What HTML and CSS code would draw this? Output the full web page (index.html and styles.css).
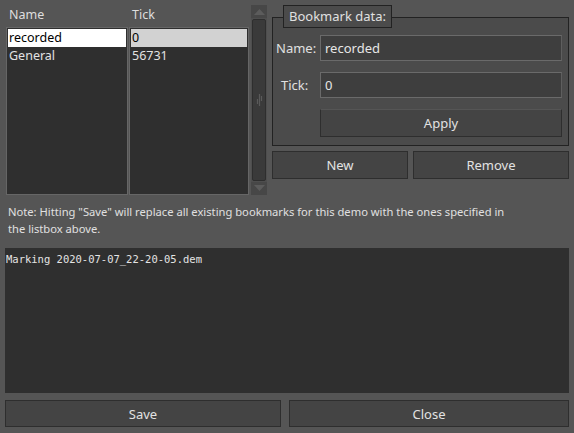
FILE: index.html
```html
<!DOCTYPE html>
<html>
<head>
<meta charset="utf-8">
<link rel="stylesheet" href="styles.css">
</head>
<body>
<div class="dialog">
  <div class="top">
    <div class="lists">
      <div class="col col-name">
        <div class="head">Name</div>
        <div class="box">
          <div class="row sel-white">recorded</div>
          <div class="row">General</div>
        </div>
      </div>
      <div class="col col-tick">
        <div class="head">Tick</div>
        <div class="box">
          <div class="row sel-gray">0</div>
          <div class="row">56731</div>
        </div>
      </div>
    </div>
    <div class="scroll">
      <div class="arrow up"><svg width="15" height="11" viewBox="0 0 15 11"><path d="M2 9 L7.5 3 L13 9 Z" fill="#5c5c5c"/></svg></div>
      <div class="thumb"><svg width="8" height="14" viewBox="0 0 8 14"><path d="M4.5 1 V13 M2.5 6 V11 M6.5 3 V8" stroke="#5a5a5a" stroke-width="1.2" fill="none"/></svg></div>
      <div class="arrow down"><svg width="15" height="11" viewBox="0 0 15 11"><path d="M2 2 L7.5 8 L13 2 Z" fill="#5c5c5c"/></svg></div>
    </div>
    <div class="right">
      <div class="group">
        <div class="legend">Bookmark data:</div>
        <div class="field">
          <span class="label">Name:</span>
          <div class="input">recorded</div>
        </div>
        <div class="field">
          <span class="label label-tick">Tick:</span>
          <div class="input">0</div>
        </div>
        <div class="field">
          <span class="label"></span>
          <div class="btn apply">Apply</div>
        </div>
      </div>
      <div class="btnrow">
        <div class="btn new">New</div>
        <div class="btn remove">Remove</div>
      </div>
    </div>
  </div>
  <p class="note">Note: Hitting "Save" will replace all existing bookmarks for this demo with the ones specified in the listbox above.</p>
  <div class="log">Marking 2020-07-07_22-20-05.dem</div>
  <div class="bottom">
    <div class="btn save">Save</div>
    <div class="btn close">Close</div>
  </div>
</div>
</body>
</html>
```

FILE: styles.css
```css
html, body {
  margin: 0;
  padding: 0;
  background: #555555;
}
body {
  width: 574px;
  height: 433px;
  overflow: hidden;
  font-family: "Noto Sans", "Open Sans", sans-serif;
  font-size: 12px;
  color: #dedede;
}
.dialog {
  display: flex;
  flex-direction: column;
  padding: 5px 5px 0 5px;
}
.top {
  display: flex;
  height: 190px;
}
.lists {
  display: flex;
  gap: 1px;
  margin-left: 1px;
}
.col {
  display: flex;
  flex-direction: column;
}
.col-name { width: 122px; }
.col-tick { width: 120px; }
.head {
  height: 22px;
  line-height: 20px;
  padding-left: 3px;
  font-size: 12.5px;
}
.box {
  flex: 1;
  background: #2f2f2f;
  border: 1px solid #666666;
  padding: 1px 1px;
}
.row {
  height: 18px;
  line-height: 18px;
  padding-left: 1px;
  color: #e2e2e2;
  font-size: 12.5px;
}
.sel-white {
  background: #ffffff;
  color: #000000;
}
.sel-gray {
  background: #d2d2d2;
  color: #000000;
}
.scroll {
  width: 17px;
  margin-left: 2px;
  display: flex;
  flex-direction: column;
  background: #4e4e4e;
}
.arrow {
  height: 13px;
  display: flex;
  align-items: center;
  justify-content: center;
  background: #474747;
}
.arrow svg { display: block; }
.thumb {
  flex: 1;
  margin: 1px 1px;
  background: #3a3a3a;
  border: 1px solid #2e2e2e;
  border-radius: 2px;
  display: flex;
  align-items: center;
  justify-content: center;
}
.right {
  margin-left: 5px;
  width: 297px;
  display: flex;
  flex-direction: column;
}
.group {
  margin-top: 12px;
  height: 129px;
  border: 1px solid #222222;
  background: #4b4b4b;
  display: flex;
  flex-direction: column;
  gap: 11px;
  padding: 0 6px 0 3px;
  box-sizing: border-box;
}
.legend {
  align-self: flex-start;
  margin: -13px 0 -4px 7px;
  height: 23px;
  line-height: 21px;
  padding: 0 5px;
  box-sizing: border-box;
  border: 1px solid #222222;
  background: #4b4b4b;
  font-size: 13px;
  color: #e0e0e0;
}
.field {
  display: flex;
  align-items: center;
}
.label {
  width: 44px;
  font-size: 13px;
  color: #e0e0e0;
}
.label-tick { padding-left: 5px; width: 39px; }
.input {
  width: 242px;
  height: 26px;
  box-sizing: border-box;
  border: 1px solid #6a6a6a;
  border-right-color: #5e5e5e;
  background: #3e3e3e;
  line-height: 24px;
  padding-left: 4px;
  font-size: 13px;
  color: #e6e6e6;
}
.btn {
  box-sizing: border-box;
  background: #444444;
  border: 1px solid #2e2e2e;
  display: flex;
  align-items: center;
  justify-content: center;
  font-size: 13px;
  color: #e2e2e2;
}
.apply {
  width: 242px;
  height: 28px;
  border-top-color: #555555;
}
.btnrow {
  display: flex;
  gap: 5px;
  margin-top: 5px;
}
.new { width: 136px; height: 28px; }
.remove { flex: 1; height: 28px; }
.note {
  margin: 8px 0 0 3px;
  width: 515px;
  font-size: 11.2px;
  line-height: 17px;
  color: #e0e0e0;
}
.log {
  margin-top: 11px;
  height: 145px;
  background: #2f2f2f;
  font-family: "DejaVu Sans Mono", monospace;
  font-size: 10.5px;
  padding: 5px 1px;
  box-sizing: border-box;
  color: #e4e4e4;
}
.bottom {
  display: flex;
  gap: 8px;
  margin-top: 7px;
}
.save { width: 276px; height: 27px; }
.close { flex: 1; height: 27px; }
```
